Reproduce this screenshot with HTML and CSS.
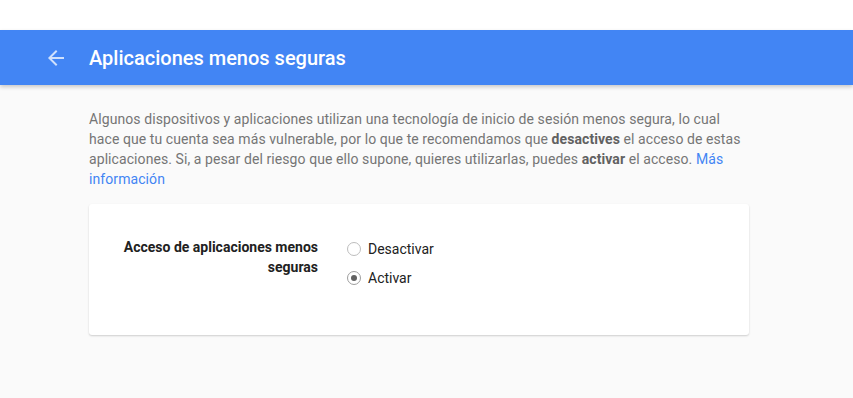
FILE: index.html
```html
<!DOCTYPE html>
<html lang="es">
<head>
<meta charset="utf-8">
<link rel="stylesheet" href="styles.css">
</head>
<body>
<div class="topspace"></div>
<header class="appbar">
  <span class="back">
    <svg width="16" height="16" viewBox="4 4 16 16"><path d="M20 11H7.83l5.59-5.59L12 4l-8 8 8 8 1.41-1.41L7.83 13H20v-2z" fill="rgba(255,255,255,0.75)"/></svg>
  </span>
  <h1 class="title">Aplicaciones menos seguras</h1>
</header>
<main class="content">
  <p class="intro">Algunos dispositivos y aplicaciones utilizan una tecnología de inicio de sesión menos segura, lo cual hace que tu cuenta sea más vulnerable, por lo que te recomendamos que <b>desactives</b> el acceso de estas aplicaciones. Si, a pesar del riesgo que ello supone, quieres utilizarlas, puedes <b>activar</b> el acceso. <a href="#">Más información</a></p>
  <section class="card">
    <div class="label">Acceso de aplicaciones menos seguras</div>
    <div class="options">
      <div class="option"><span class="radio"></span>Desactivar</div>
      <div class="option"><span class="radio checked"></span>Activar</div>
    </div>
  </section>
</main>
</body>
</html>
```
FILE: styles.css
```css
html, body { margin: 0; padding: 0; }
body {
  background: #fafafa;
  font-family: Roboto, "Liberation Sans", Arial, sans-serif;
  width: 853px;
  height: 398px;
  overflow: hidden;
}
.topspace { height: 30px; background: #fff; }
.appbar {
  height: 55px;
  background: #4285f4;
  display: flex;
  align-items: center;
  box-shadow: 0 2px 4px rgba(0,0,0,0.2);
  position: relative;
}
.back {
  width: 16px;
  height: 16px;
  margin-left: 48px;
  margin-right: 25px;
  display: flex;
}
.title {
  margin: 0;
  color: #fff;
  font-size: 20px;
  font-weight: 500;
}
.content {
  padding: 24px 0 0 89px;
  width: 660px;
}
.intro {
  margin: 0;
  font-size: 14px;
  line-height: 20px;
  color: #757575;
  letter-spacing: 0.08px;
}
.intro b { color: #616161; font-weight: 700; }
.intro a { color: #4285f4; text-decoration: none; }
.card {
  margin-top: 15px;
  background: #fff;
  border-radius: 3px;
  box-shadow: 0 1px 2px rgba(0,0,0,0.18);
  height: 131px;
  box-sizing: border-box;
  padding-top: 33px;
  display: flex;
}
.label {
  width: 229px;
  box-sizing: border-box;
  padding-left: 30px;
  text-align: right;
  font-size: 14px;
  line-height: 20px;
  font-weight: 700;
  color: #212121;
}
.options {
  margin-left: 29px;
  padding-top: 2px;
  display: flex;
  flex-direction: column;
  gap: 9px;
}
.option {
  display: flex;
  align-items: center;
  font-size: 14px;
  line-height: 20px;
  color: #212121;
}
.radio {
  width: 12px;
  height: 12px;
  border: 1px solid #bdbdbd;
  border-radius: 50%;
  margin-right: 7px;
  position: relative;
  box-sizing: content-box;
}
.radio.checked { border-color: #9e9e9e; }
.radio.checked::after {
  content: "";
  position: absolute;
  left: 3px;
  top: 3px;
  width: 6px;
  height: 6px;
  border-radius: 50%;
  background: #616161;
}
```
